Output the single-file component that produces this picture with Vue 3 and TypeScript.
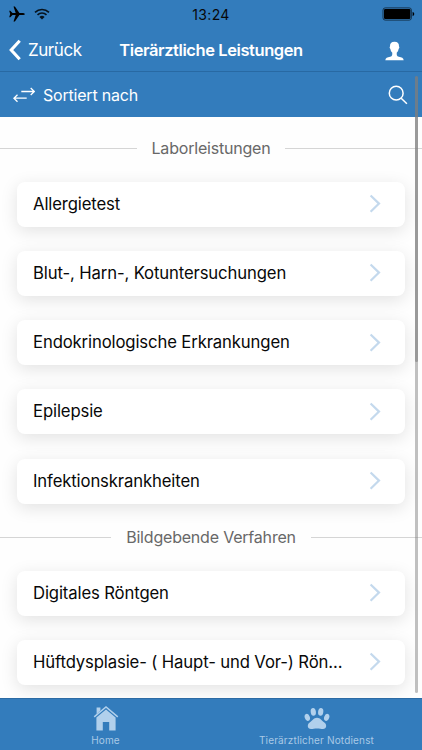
<script setup lang="ts">
interface Section {
  title: string
  items: string[]
}

const sections: Section[] = [
  {
    title: 'Laborleistungen',
    items: [
      'Allergietest',
      'Blut-, Harn-, Kotuntersuchungen',
      'Endokrinologische Erkrankungen',
      'Epilepsie',
      'Infektionskrankheiten',
    ],
  },
  {
    title: 'Bildgebende Verfahren',
    items: ['Digitales Röntgen', 'Hüftdysplasie- ( Haupt- und Vor-) Rön...'],
  },
]
</script>

<template>
  <div class="screen">
    <header class="top">
      <div class="status">
        <div class="signals">
          <svg class="plane" width="16" height="16" viewBox="0 0 16 16">
            <path d="M.2 4.7h1.1l2.2 2.2h3.2L4.5.6h1.400l4.500 6.300h3.700q1.800.3 1.800 1.100t-1.800 1.100h-3.700l-4.500 6.300H4.500l2.200-6.300H3.500l-2.200 2.200H.2L1.200 8z" />
          </svg>
          <svg class="wifi" width="16" height="12" viewBox="0 0 16 12">
            <path d="M1 4.300a10.200 10.200 0 0 1 14 0M3.500 6.800a6.600 6.600 0 0 1 9 0" />
            <path class="dot" d="M8 11.400 5.400 8.900a3.800 3.800 0 0 1 5.200 0z" />
          </svg>
        </div>
        <time class="clock">13:24</time>
        <svg class="battery" width="34" height="14" viewBox="0 0 34 14">
          <rect class="shell" x="1" y=".9" width="28.400" height="12.200" rx="2.200" />
          <rect x="2" y="2" width="26.400" height="10" rx="1.200" />
          <path d="M30.600 4.700q1.700.7 1.700 2.300t-1.700 2.300z" />
        </svg>
      </div>
      <nav class="nav">
        <div class="back">
          <svg width="13" height="22" viewBox="0 0 13 22"><path d="M10.700 1.700 2.200 11l8.500 9.300" /></svg>
          <span>Zurück</span>
        </div>
        <h1>Tierärztliche Leistungen</h1>
        <svg class="person" width="19" height="20" viewBox="0 0 19 20">
          <path d="M9.500.8c3.200 0 4.700 2 4.500 4.800.6.3.5 1.800-.4 2.400-.3 1.800-1 2.800-1.800 3.600-.2 2.100-.2 3.700 2 4.200 3 .6 4.600.9 4.900 3.500H.3c.3-2.600 1.900-2.900 4.900-3.500 2.200-.5 2.200-2.100 2-4.200C6.400 10.800 5.700 9.800 5.400 8c-.9-.6-1-2.100-.4-2.400C4.800 2.800 6.300.8 9.500.8z" />
        </svg>
      </nav>
    </header>

    <div class="sort">
      <svg class="arrows" width="22" height="16" viewBox="0 0 22 16">
        <path d="M8.300 4.500h13M17.700 1l3.600 3.500L17.700 8M13.700 11.200H.9M4.500 7.700.9 11.200l3.600 3.500" />
      </svg>
      <span>Sortiert nach</span>
      <svg class="search" width="20" height="20" viewBox="0 0 20 20">
        <circle cx="8.200" cy="8.200" r="6.900" />
        <path d="m13.200 13.200 5.700 5.600" />
      </svg>
    </div>

    <main class="content">
      <section v-for="section in sections" :key="section.title">
        <h2>{{ section.title }}</h2>
        <ul>
          <li v-for="item in section.items" :key="item">
            <span class="label">{{ item }}</span>
            <svg width="12" height="20" viewBox="0 0 12 20"><path d="m1.600 1.500 8.400 8.100-8.400 8.100" /></svg>
          </li>
        </ul>
      </section>
    </main>

    <footer class="tabs">
      <div class="tab">
        <svg width="26" height="26" viewBox="0 0 26 26">
          <path d="M3.600 2.500h3.800v3L3.600 9z" />
          <path class="roof" d="m1.200 11.900 11.800-10 11.800 10" />
          <path d="M13 4.400 22.600 12.500V25.500h-6.400v-8.600H9.800v8.600H3.400V12.500z" />
        </svg>
        <span>Home</span>
      </div>
      <div class="tab emergency">
        <svg width="26" height="26" viewBox="0 0 26 26">
          <ellipse cx="9.300" cy="6.800" rx="2.600" ry="3.900" transform="rotate(-8 9.300 6.800)" />
          <ellipse cx="16.700" cy="6.800" rx="2.600" ry="3.900" transform="rotate(8 16.700 6.800)" />
          <ellipse cx="3.300" cy="12.400" rx="2.500" ry="3.600" transform="rotate(-20 3.300 12.400)" />
          <ellipse cx="22.700" cy="12.400" rx="2.500" ry="3.600" transform="rotate(20 22.700 12.400)" />
          <path d="M13 12.800c3.400 0 4.600 3 7.300 4.800 2.900 2 2.400 6.500-1.300 6.500-2 0-3.400-.6-6-.6s-4 .6-6 .6c-3.700 0-4.200-4.500-1.300-6.500C8.400 15.800 9.600 12.800 13 12.800z" />
        </svg>
        <span>Tierärztlicher Notdienst</span>
      </div>
    </footer>

    <div class="scrollbar"><i></i></div>
  </div>
</template>

<style>
body {
  background: #fff;
}
</style>

<style scoped>
.screen {
  position: relative;
  display: flex;
  flex-direction: column;
  width: 422px;
  height: 750px;
  overflow: hidden;
  background: #fefefe;
  color: #080808;
  font-family: Inter, "Liberation Sans", sans-serif;
}
svg {
  display: block;
  flex: none;
}
.top {
  height: 71px;
  flex: none;
  background: #337cbc;
  border-bottom: 1px solid #2869a3;
}
.status {
  display: grid;
  grid-template-columns: 1fr auto 1fr;
  align-items: center;
  height: 28px;
  padding: 0 8px;
}
.signals {
  display: flex;
  align-items: center;
  gap: 9px;
  margin-left: 1px;
}
.wifi {
  fill: none;
  stroke: #07131d;
  stroke-width: 1.6;
}
.wifi .dot {
  fill: #07131d;
  stroke: none;
}
.clock {
  font-size: 14px;
  letter-spacing: 0.35px;
}
.battery {
  justify-self: end;
  margin-right: -2px;
}
.shell {
  fill: none;
  stroke: #15344f;
  stroke-width: 1;
}
.nav {
  display: grid;
  grid-template-columns: 1fr auto 1fr;
  align-items: center;
  height: 44px;
  padding: 0 9px;
  color: #fff;
}
.back {
  display: flex;
  align-items: center;
  gap: 6px;
  font-size: 17px;
  letter-spacing: -0.45px;
}
.back svg {
  fill: none;
  stroke: #fff;
  stroke-width: 3.1;
}
h1 {
  margin: 0;
  font-size: 16.5px;
  font-weight: 600;
  letter-spacing: -0.42px;
  white-space: nowrap;
}
.person {
  justify-self: end;
  margin: 1px 9px 0 0;
  fill: #fff;
}
.sort {
  display: flex;
  align-items: center;
  flex: none;
  height: 45px;
  padding: 0 14px 0 13px;
  background: #337cbc;
  color: #fff;
  font-size: 16px;
  letter-spacing: -0.2px;
}
.arrows {
  margin-right: 8px;
  fill: none;
  stroke: #fff;
  stroke-width: 1.3;
}
.search {
  margin-left: auto;
  fill: none;
  stroke: #fff;
  stroke-width: 1.5;
}
.content {
  flex: 1;
  min-height: 0;
  overflow: hidden;
}
h2 {
  display: flex;
  align-items: center;
  gap: 15px;
  height: 24px;
  margin: 19px 0 21.5px;
  color: #686868;
  font-size: 16px;
  font-weight: 400;
  letter-spacing: -0.2px;
  white-space: nowrap;
}
section + section h2 {
  margin-top: 21.5px;
}
h2::before,
h2::after {
  content: "";
  flex: 1;
  height: 1px;
  background: #d5d5d5;
}
ul {
  display: flex;
  flex-direction: column;
  gap: 24.3px;
  margin: 0 17px;
  padding: 0;
  list-style: none;
}
li {
  display: flex;
  align-items: center;
  height: 45px;
  padding: 0 24px 0 16px;
  border-radius: 8px;
  background: #fff;
  box-shadow: 0 4px 17px rgba(0, 0, 0, 0.115);
}
.label {
  padding-bottom: 1px;
  font-size: 16.7px;
  line-height: 24px;
  letter-spacing: -0.13px;
  white-space: nowrap;
}
li svg {
  margin-left: auto;
  fill: none;
  stroke: #c4d9ed;
  stroke-width: 2.2;
}
.tabs {
  display: grid;
  grid-template-columns: 1fr 1fr;
  flex: none;
  height: 51px;
  border-top: 1px solid #2c6ba4;
  background: #337cbc;
}
.tab {
  display: flex;
  flex-direction: column;
  align-items: center;
  gap: 2px;
  padding-top: 6px;
  color: #a9c9e6;
  font-size: 10px;
  line-height: 14px;
  letter-spacing: 0.17px;
}
.tab svg {
  fill: #b1d0ec;
}
.tab .roof {
  fill: none;
  stroke: #b1d0ec;
  stroke-width: 1.5;
}
.scrollbar {
  position: absolute;
  top: 76px;
  right: 4px;
  width: 3px;
  height: 617px;
  border-radius: 2px;
  background: rgba(125, 125, 125, 0.48);
}
.scrollbar i {
  display: block;
  height: 286px;
  border-radius: 2px;
  background: rgba(125, 125, 125, 0.58);
}
</style>
